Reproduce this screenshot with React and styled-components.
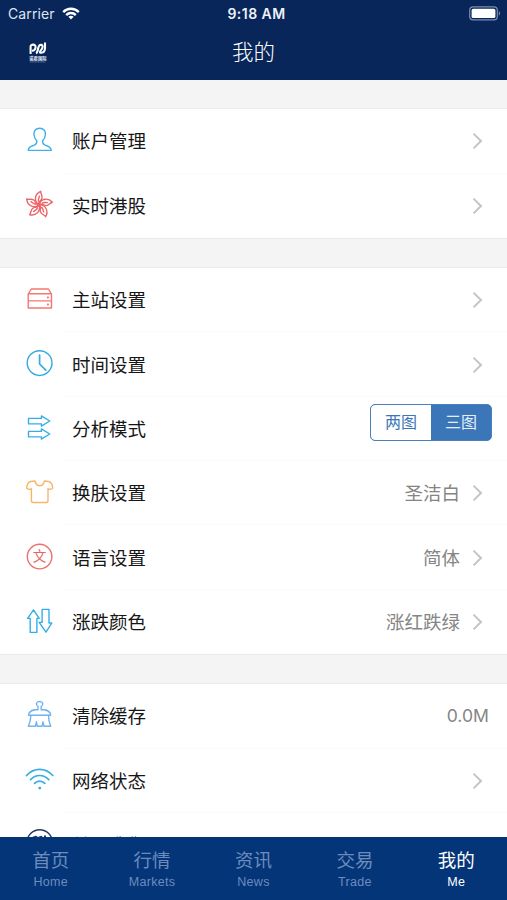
import { createGlobalStyle, styled } from "styled-components";

const GlobalStyle = createGlobalStyle`
  * {
    box-sizing: border-box;
  }
  body {
    margin: 0;
    background: #f4f4f4;
    font-family: Inter, "Noto Sans CJK SC", sans-serif;
    overflow: hidden;
  }
`;

const Screen = styled.div`
  width: 507px;
  height: 900px;
  display: flex;
  flex-direction: column;
  overflow: hidden;
  background: #f4f4f4;
`;

const Header = styled.header`
  flex: none;
  height: 80px;
  background: #08265a;
  color: #fff;
`;

const StatusBar = styled.div`
  display: grid;
  grid-template-columns: 1fr auto 1fr;
  align-items: center;
  height: 26px;
  padding: 1px 6px 0 8px;
  font-size: 14px;
  line-height: 25px;
`;

const Carrier = styled.div`
  display: flex;
  align-items: center;
  gap: 7px;
  color: #dfe5ef;
  letter-spacing: 0.1px;
`;

const Time = styled.div`
  font-weight: 600;
  font-size: 14px;
  letter-spacing: 0.45px;
  color: #eef1f7;
  padding-left: 4px;
`;

const Battery = styled.svg`
  justify-self: end;
  display: block;
`;

const TitleBar = styled.div`
  display: grid;
  grid-template-columns: 1fr auto 1fr;
  align-items: center;
  height: 54px;
  padding: 0 26px 2px;
`;

const Title = styled.h1`
  margin: 0;
  font-size: 21.5px;
  font-weight: 300;
  line-height: 30px;
`;

const Content = styled.main`
  flex: 1;
  min-height: 0;
  overflow: hidden;
  display: flex;
  flex-direction: column;
  gap: 30.1px;
  padding-top: 29.3px;
`;

const Group = styled.section`
  flex: none;
  background: #fff;
  box-shadow: 0 -1px 0 #ebebeb, 0 1px 0 #e9e9e9;
`;

const Row = styled.div`
  display: flex;
  align-items: center;
  height: 64.35px;
  padding-left: 25px;
`;

const IconBox = styled.svg`
  flex: none;
  width: 30px;
  height: 30px;
  margin-bottom: 4px;
  fill: none;
  stroke: ${(p) => p.$color};
  stroke-width: 1.4;
  stroke-linejoin: round;
  stroke-linecap: round;
`;

const RowBody = styled.div`
  flex: 1;
  height: 100%;
  display: flex;
  align-items: center;
  margin-left: 9px;
  padding: 1px 18px 0 8px;
  border-bottom: 1px solid ${(p) => (p.$last ? "transparent" : "#fbfbfb")};
`;

const Label = styled.span`
  flex: 1;
  font-size: 18.5px;
  line-height: 26px;
  color: #161616;
`;

const Value = styled.span`
  font-size: ${(p) => (p.$latin ? "17.6px" : "18.5px")};
  line-height: 26px;
  color: #858585;
`;

const Arrow = styled.svg`
  width: 11px;
  height: 18px;
  margin: 0 6px 0 12px;
  fill: none;
  stroke: #c4c4c6;
  stroke-width: 2;
`;

const Segmented = styled.div`
  align-self: flex-start;
  display: flex;
  width: 122px;
  height: 37px;
  margin: 6.5px -3px 0 0;
  border: 1px solid #4a80be;
  border-radius: 5px;
  background: #3b76b9;
  overflow: hidden;
`;

const Segment = styled.div`
  flex: 1;
  font-size: 16px;
  line-height: 35px;
  text-align: center;
  color: ${(p) => (p.$active ? "#e4eefa" : "#3b76b9")};
  background: ${(p) => (p.$active ? "#3b76b9" : "#fff")};
  border-radius: ${(p) => (p.$active ? "0" : "4px 0 0 4px")};
`;

const TabBar = styled.nav`
  flex: none;
  display: grid;
  grid-template-columns: repeat(5, 1fr);
  height: 63px;
  background: #043579;
`;

const Tab = styled.div`
  display: flex;
  flex-direction: column;
  align-items: center;
  padding-top: 10.4px;
  color: ${(p) => (p.$active ? "#fff" : "#6c8cbc")};
`;

const TabName = styled.span`
  font-size: 18.5px;
  line-height: 26px;
`;

const TabSub = styled.span`
  font-family: "Liberation Sans", sans-serif;
  font-size: 12.5px;
  line-height: 19px;
  letter-spacing: 0.3px;
`;

const petal = "M13.6 15.4C8.6 12.4 8.8 5.4 15 2.2C14.8 4.8 17.4 6 16.6 9.2C16 11.6 13.6 12 13.6 15.4M13.2 12.2C12.6 10 13.8 8.6 14 7.2";

const icons = {
  user: (
    <path d="M14.7 4.2C10.7 4.2 8.8 6.9 9 10.5C9.2 13.6 10.2 15.5 11.8 16.9C12.1 19.2 11.4 20.3 9.2 21.2C6.2 22.3 3.4 22.9 3.2 26.4H26.2C26 22.9 23.2 22.3 20.2 21.2C18 20.3 17.3 19.2 17.6 16.9C19.2 15.5 20.2 13.6 20.4 10.5C20.6 6.9 18.7 4.2 14.7 4.2Z" />
  ),
  flower: [3, 75, 147, 219, 291].map((angle) => (
    <path key={angle} d={petal} transform={`rotate(${angle} 14 15.8)`} />
  )),
  server: (
    <>
      <path d="M3.2 11.2L6.3 6H23.4L26.5 11.2M3.2 10.8H26.5V25H3.2ZM3.2 17.9H26.5" />
      <path d="M22.8 14.4h.2M22.8 21.4h.2" strokeWidth="2" />
    </>
  ),
  clock: (
    <>
      <circle cx="14.6" cy="15.1" r="12.4" />
      <path d="M14.6 7.2V16L20.8 22.2" strokeWidth="1.7" />
    </>
  ),
  arrows: (
    <path d="M3.5 6.4H16.4V3.9L24.8 9L16.4 14.1V11.9H3.5ZM3.5 19.4H16.4V16.9L24.8 22L16.4 27.1V24.9H3.5Z" />
  ),
  shirt: (
    <path d="M10 5L5.6 5.5C3.5 6 2 8.5 1.6 12.1C2.6 13.4 4.3 13.6 6.4 12.8V24.7C6.4 26 7.2 26.5 8.4 26.5H21C22.2 26.5 23 26 23 24.7V12.8C25 13.6 26.7 13.4 27.8 12.1C27.4 8.5 25.9 6 23.8 5.5L19.4 5C18.6 8.2 17 9.8 14.7 9.8C12.4 9.8 10.8 8.2 10 5Z" />
  ),
  language: (
    <>
      <circle cx="14.6" cy="15.6" r="12.3" />
      <text x="14.6" y="20.4" fontSize="13.5" textAnchor="middle" fill="#e4665f" stroke="none">文</text>
    </>
  ),
  updown: (
    <path d="M8.5 4.8L14.2 13.4H11.9V27.4H5.2V13.4H2.6ZM17.1 4.4H24V18H26.8L21 27.2L14.2 17.4H17.1Z" />
  ),
  brush: (
    <>
      <path d="M13 10.8V7.4C11.6 6.7 11.2 5.6 11.4 4.5C11.8 3.1 13.1 2.5 14.6 2.5C16.1 2.5 17.4 3.1 17.8 4.5C18 5.6 17.6 6.7 16.2 7.4V10.8H19C21.8 11 23.8 12 25.2 14.1L25.7 16.3H3.5L4 14.1C5.4 12 7.4 11 10.2 10.8Z" />
      <path d="M5.8 16.3C5.8 20.6 4.8 24.2 3.4 27.3H10.4L11.4 22.8L12.3 27.3H17L18 22.8L19 27.3H25.8C24.4 24.2 23.5 20.6 23.5 16.3" />
    </>
  ),
  wifi: (
    <>
      <path d="M1.5 11.5C9 3.3 20.2 3.3 27.8 11.5M5.5 15.6C10.8 10.1 18.4 10.1 23.8 15.6M9.5 19.4C12.5 16.4 16.8 16.4 19.8 19.4" strokeWidth="1.7" />
      <path d="M14.7 24.1h.1" strokeWidth="2.8" />
    </>
  ),
  about: (
    <>
      <circle cx="14.7" cy="14.6" r="12.8" />
      <path d="M8 15V9.8L11 8.8L12.6 10.2L16.4 8.8V15M20 14V8.2" strokeWidth="2" />
    </>
  ),
};

const groups = [
  [
    { icon: "user", color: "#41b2e8", label: "账户管理", arrow: true },
    { icon: "flower", color: "#ed6467", label: "实时港股", arrow: true },
  ],
  [
    { icon: "server", color: "#f47772", label: "主站设置", arrow: true },
    { icon: "clock", color: "#35a9e1", label: "时间设置", arrow: true },
    { icon: "arrows", color: "#35aee8", label: "分析模式", segments: ["两图", "三图"] },
    { icon: "shirt", color: "#f8b66b", label: "换肤设置", value: "圣洁白", arrow: true },
    { icon: "language", color: "#ed706b", label: "语言设置", value: "简体", arrow: true },
    { icon: "updown", color: "#35aee8", label: "涨跌颜色", value: "涨红跌绿", arrow: true },
  ],
  [
    { icon: "brush", color: "#70b3f1", label: "清除缓存", value: "0.0M", latin: true },
    { icon: "wifi", color: "#35aee0", label: "网络状态", arrow: true },
    { icon: "about", color: "#26375f", label: "关于我们", arrow: true },
  ],
];

const tabs = [
  ["首页", "Home"],
  ["行情", "Markets"],
  ["资讯", "News"],
  ["交易", "Trade"],
  ["我的", "Me"],
];

const Logo = () => (
  <svg width="24" height="24" viewBox="0 0 24 24" fill="none">
    <path
      d="M4.6 14V6.6C4.6 4 9.8 3.8 9.6 7C9.4 9.6 8.4 10.8 6 10.8M10 13.2C13.2 12 10.8 4.8 15 4.8C17.4 4.9 16.8 8 15 10.2C13.6 12 13.6 13 15.2 12.8C18 12.6 19 11 19 8V2.4"
      stroke="#fff"
      strokeWidth="2.1"
    />
    <text x="11.9" y="19.8" fontSize="4.3" fontWeight="700" textAnchor="middle" fill="#e6ebf5">诺君国际</text>
    <path d="M4 22H20" stroke="#7184a8" strokeWidth=".8" strokeDasharray="1.2 .4" />
  </svg>
);

const SettingRow = ({ item, last }) => (
  <Row>
    <IconBox viewBox="0 0 30 30" $color={item.color}>
      {icons[item.icon]}
    </IconBox>
    <RowBody $last={last}>
      <Label>{item.label}</Label>
      {item.value && <Value $latin={item.latin}>{item.value}</Value>}
      {item.segments && (
        <Segmented>
          {item.segments.map((name, i) => (
            <Segment key={name} $active={i === 1}>{name}</Segment>
          ))}
        </Segmented>
      )}
      {item.arrow && (
        <Arrow viewBox="0 0 11 18">
          <path d="M1.5 1.6L9 9L1.5 16.4" />
        </Arrow>
      )}
    </RowBody>
  </Row>
);

const App = () => (
  <>
    <GlobalStyle />
    <Screen>
      <Header>
        <StatusBar>
          <Carrier>
            Carrier
            <svg width="18" height="13" viewBox="0 0 18 13" fill="none" stroke="#fff" strokeWidth="2.3">
              <path d="M1.2 5.1C5.5 .6 12.5 .6 16.8 5.1M4.2 8.1C6.9 5.3 11.1 5.3 13.8 8.1" />
              <path d="M6.4 9.8C7.9 8.4 10.1 8.4 11.6 9.8L9 12.6Z" fill="#fff" stroke="none" />
            </svg>
          </Carrier>
          <Time>9:18 AM</Time>
          <Battery width="32" height="15" viewBox="0 0 32 15">
            <rect x=".7" y=".9" width="27.6" height="13" rx="3.4" fill="none" stroke="#7d8cab" strokeWidth="1.2" />
            <rect x="2.6" y="2.8" width="23.8" height="9.2" rx="1.6" fill="#fff" />
            <path d="M29.8 5.3C31.4 5.8 31.4 9 29.8 9.5Z" fill="#7d8cab" />
          </Battery>
        </StatusBar>
        <TitleBar>
          <Logo />
          <Title>我的</Title>
        </TitleBar>
      </Header>
      <Content>
        {groups.map((items, g) => (
          <Group key={g}>
            {items.map((item, i) => (
              <SettingRow key={item.label} item={item} last={i === items.length - 1} />
            ))}
          </Group>
        ))}
      </Content>
      <TabBar>
        {tabs.map(([name, sub]) => (
          <Tab key={sub} $active={sub === "Me"}>
            <TabName>{name}</TabName>
            <TabSub>{sub}</TabSub>
          </Tab>
        ))}
      </TabBar>
    </Screen>
  </>
);

export default App;
